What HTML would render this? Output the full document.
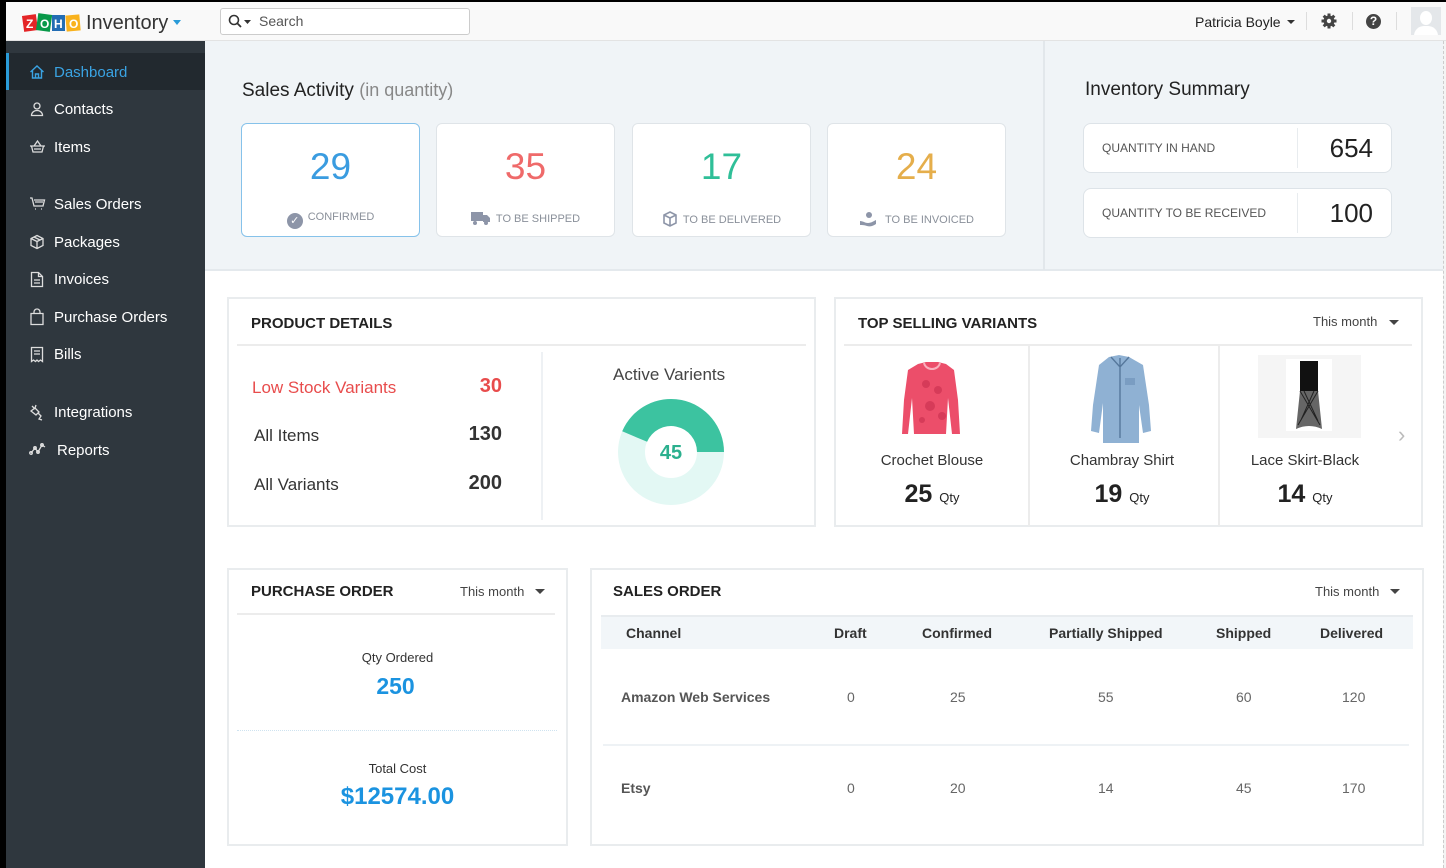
<!DOCTYPE html>
<html><head><meta charset="utf-8"><style>
*{margin:0;padding:0;box-sizing:border-box}
body{width:1446px;height:868px;overflow:hidden;background:#000;font-family:"Liberation Sans",sans-serif;color:#333;position:relative}
.a{position:absolute;white-space:nowrap}
.box{position:absolute;background:#fff;border:2px solid #e9ecee}
.card{position:absolute;background:#fff;border:1px solid #dfe4e8;border-radius:6px;width:179px;height:114px;top:123px}
.num{position:absolute;left:0;right:0;top:22px;text-align:center;font-size:37px;font-weight:300;letter-spacing:0px}
.lbl{position:absolute;left:0;right:0;top:87px;text-align:center;font-size:11px;color:#8a909a}
.nav{position:absolute;left:54px;font-size:15px;color:#fff}
.ic{position:absolute;left:29px}
.inv{position:absolute;left:1083px;width:309px;height:50px;background:#fff;border:1px solid #dde3e8;border-radius:8px}
.th{font-size:14px;font-weight:bold;color:#333}
.td{font-size:14px;color:#666}
.rn{position:absolute;right:0;width:80px;text-align:right}
</style></head><body>
<div class="a" style="left:6px;top:2px;width:1440px;height:866px;background:#fff"></div>
<div class="a" style="left:6px;top:2px;width:1440px;height:39px;background:#f9f9f9;border-bottom:1px solid #e3e3e3"></div>
<div class="a" style="left:22px;top:11px;height:21px">
<svg width="60" height="24" viewBox="0 0 60 24"><rect x="1" y="4" width="14" height="16" fill="#e42527" transform="rotate(-8 8 12)"/><rect x="15" y="3" width="14" height="17" fill="#089949" transform="rotate(8 22 12)"/><rect x="30" y="4" width="13" height="16" fill="#226db4"/><rect x="44" y="4" width="14" height="16" fill="#f9b21d" transform="rotate(-5 51 12)"/><text x="4" y="17" font-size="12" font-weight="bold" fill="#fff" font-family="Liberation Sans">Z</text><text x="18" y="17" font-size="12" font-weight="bold" fill="#fff" font-family="Liberation Sans">O</text><text x="32" y="17" font-size="12" font-weight="bold" fill="#fff" font-family="Liberation Sans">H</text><text x="47" y="17" font-size="12" font-weight="bold" fill="#fff" font-family="Liberation Sans">O</text></svg></div>
<div class="a" style="left:86px;top:11px;font-size:20px;color:#333;line-height:24px">Inventory</div>
<div class="a" style="left:173px;top:20px;border:4px solid transparent;border-top:5px solid #2a9bd8"></div>
<div class="a" style="left:220px;top:8px;width:250px;height:27px;background:#fff;border:1px solid #ccc;border-radius:3px"></div>
<svg class="a" style="left:228px;top:14px" width="26" height="15"><circle cx="6" cy="6" r="4.5" fill="none" stroke="#333" stroke-width="1.6"/><line x1="9.5" y1="9.5" x2="13" y2="13" stroke="#333" stroke-width="1.8"/><path d="M16 6h7l-3.5 4z" fill="#333"/></svg>
<div class="a" style="left:259px;top:12px;font-size:14px;color:#555;line-height:18px">Search</div>
<div class="a" style="left:1195px;top:13px;font-size:14px;color:#222;line-height:18px">Patricia Boyle</div>
<div class="a" style="left:1287px;top:20px;border:4px solid transparent;border-top:4px solid #333"></div>
<div class="a" style="left:1306px;top:12px;width:1px;height:18px;background:#ddd"></div>
<svg class="a" style="left:1321px;top:13px" width="16" height="16" viewBox="0 0 16 16"><g fill="#444"><circle cx="8" cy="8" r="5.5"/><rect x="6.5" y="0.5" width="3" height="15"/><rect x="0.5" y="6.5" width="15" height="3"/><rect x="6.5" y="0.5" width="3" height="15" transform="rotate(45 8 8)"/><rect x="6.5" y="0.5" width="3" height="15" transform="rotate(-45 8 8)"/></g><circle cx="8" cy="8" r="2.2" fill="#f9f9f9"/></svg>
<div class="a" style="left:1352px;top:12px;width:1px;height:18px;background:#ddd"></div>
<div class="a" style="left:1366px;top:14px;width:15px;height:15px;border-radius:50%;background:#444;color:#fff;font-size:12px;font-weight:bold;text-align:center;line-height:15px">?</div>
<div class="a" style="left:1396px;top:12px;width:1px;height:18px;background:#ddd"></div>
<div class="a" style="left:1411px;top:7px;width:30px;height:28px;background:#e4e7ea;overflow:hidden"><div style="position:absolute;left:9px;top:4px;width:12px;height:14px;border-radius:50%;background:#fff"></div><div style="position:absolute;left:3px;top:19px;width:24px;height:14px;border-radius:10px 10px 0 0;background:#fff"></div></div>
<div class="a" style="left:6px;top:41px;width:199px;height:827px;background:#2f373e"></div>
<div class="a" style="left:6px;top:53px;width:199px;height:37px;background:#22292f;border-left:3px solid #2a9bd8"></div>
<svg class="ic" style="top:64px" width="16" height="16" viewBox="0 0 16 16" fill="none" stroke="#3aa3e3" stroke-width="1.4"><path d="M1.5 8L8 2l6.5 6M3.5 6.5V14h9V6.5M6.5 14v-4h3v4"/></svg>
<div class="nav" style="top:64px;color:#3aa3e3">Dashboard</div>
<svg class="ic" style="top:101px" width="16" height="16" viewBox="0 0 16 16" fill="none" stroke="#ddd" stroke-width="1.3"><circle cx="8" cy="5" r="3"/><path d="M2.5 14.5c0-3 2.5-5 5.5-5s5.5 2 5.5 5z"/></svg>
<div class="nav" style="top:101px">Contacts</div>
<svg class="ic" style="top:139px" width="17" height="16" viewBox="0 0 17 16" fill="none" stroke="#ddd" stroke-width="1.3"><path d="M1 7h15M2.5 7l1.5 6h9l1.5-6M5 7l3.5-5 3.5 5M5 10h7"/></svg>
<div class="nav" style="top:139px">Items</div>
<svg class="ic" style="top:196px" width="17" height="16" viewBox="0 0 17 16" fill="none" stroke="#ddd" stroke-width="1.3"><path d="M1 2h2l2 8h9l1.5-6H5M6 6h8M6 13h1M12 13h1"/></svg>
<div class="nav" style="top:196px">Sales Orders</div>
<svg class="ic" style="top:234px" width="16" height="16" viewBox="0 0 16 16" fill="none" stroke="#ddd" stroke-width="1.3"><path d="M8 1.5l6 3v7l-6 3-6-3v-7zM2 4.5l6 3 6-3M8 7.5v7M5 3l6 3"/></svg>
<div class="nav" style="top:234px">Packages</div>
<svg class="ic" style="top:271px" width="16" height="17" viewBox="0 0 16 17" fill="none" stroke="#ddd" stroke-width="1.3"><path d="M2.5 1.5h7l4 4v10h-11zM9.5 1.5v4h4M5 9h6M5 12h6"/></svg>
<div class="nav" style="top:271px">Invoices</div>
<svg class="ic" style="top:308px" width="16" height="18" viewBox="0 0 16 18" fill="none" stroke="#ddd" stroke-width="1.3"><path d="M2 5.5h12v11H2zM5 5.5V4a3 3 0 016 0v1.5"/></svg>
<div class="nav" style="top:309px">Purchase Orders</div>
<svg class="ic" style="top:346px" width="16" height="17" viewBox="0 0 16 17" fill="none" stroke="#ddd" stroke-width="1.3"><path d="M2.5 1.5h11v14l-2-1.5-2 1.5-1.5-1.5-1.5 1.5-2-1.5-2 1.5zM5 5h6M5 8h6"/></svg>
<div class="nav" style="top:346px">Bills</div>
<svg class="ic" style="top:404px" width="16" height="17" viewBox="0 0 16 17" fill="none" stroke="#ddd" stroke-width="1.3"><path d="M3 2l3 3M7 1l-1 3M2 7l4-3 4 4-3 3zM9 9l3 3-2 3 3 1"/></svg>
<div class="nav" style="top:404px">Integrations</div>
<svg class="ic" style="top:441px" width="18" height="16" viewBox="0 0 18 16" fill="none" stroke="#ddd" stroke-width="1.3"><path d="M2 12l4-5 3 4 4-7 3 2"/><circle cx="2" cy="12" r="1.3"/><circle cx="6" cy="7" r="1.3"/><circle cx="9" cy="11" r="1.3"/><circle cx="13" cy="4" r="1.3"/></svg>
<div class="nav" style="top:442px;left:57px">Reports</div>
<div class="a" style="left:205px;top:41px;width:1238px;height:230px;background:#f0f4f7;border-bottom:2px solid #e4e9ed"></div>
<div class="a" style="left:1043px;top:41px;width:2px;height:229px;background:#e2e7eb"></div>
<div class="a" style="left:1443px;top:41px;width:3px;height:827px;background:#f4f4f4;border-left:1px dashed #ccc"></div>
<div class="a" style="left:242px;top:78px;font-size:19px;color:#222;line-height:24px">Sales Activity <span style="color:#888;font-weight:300;font-size:18px">(in quantity)</span></div>
<div class="card" style="left:241px;border:1.5px solid #86c2ea"><div class="num" style="color:#3a9ce0">29</div><div class="lbl"><span style="display:inline-block;width:16px;height:16px;border-radius:50%;background:#8d95a8;color:#fff;font-size:11px;line-height:16px;vertical-align:-4px;margin-right:5px">✓</span>CONFIRMED</div></div>
<div class="card" style="left:436px"><div class="num" style="color:#ef6a6a">35</div><div class="lbl"><svg width="20" height="14" style="vertical-align:-3px;margin-right:5px"><rect x="0" y="1" width="12" height="9" fill="#8d95a8"/><path d="M12 4h4l3 3v4h-7z" fill="#8d95a8"/><circle cx="4" cy="12" r="2" fill="#8d95a8"/><circle cx="15" cy="12" r="2" fill="#8d95a8"/></svg>TO BE SHIPPED</div></div>
<div class="card" style="left:632px"><div class="num" style="color:#2fbf98">17</div><div class="lbl"><svg width="16" height="16" style="vertical-align:-4px;margin-right:5px" fill="none" stroke="#8d95a8" stroke-width="1.6"><path d="M8 1l6 3v8l-6 3-6-3V4zM2 4l6 3 6-3M8 7v8"/></svg>TO BE DELIVERED</div></div>
<div class="card" style="left:827px"><div class="num" style="color:#e5ae4b">24</div><div class="lbl"><svg width="18" height="16" style="vertical-align:-4px;margin-right:8px"><circle cx="10" cy="4" r="3" fill="#8d95a8"/><path d="M1 10c3 0 5 2 8 2s6-2 8-3v4c-3 2-6 3-9 2s-5-1-7-1z" fill="#8d95a8"/></svg>TO BE INVOICED</div></div>
<div class="a" style="left:1085px;top:78px;font-size:19px;color:#222;line-height:24px">Inventory Summary</div>
<div class="inv" style="top:123px"><div class="a" style="left:18px;top:17px;font-size:12px;color:#555">QUANTITY IN HAND</div><div class="a" style="left:213px;top:4px;width:1px;height:40px;background:#e8ecef"></div><div class="a" style="right:18px;top:9px;font-size:26px;color:#222">654</div></div>
<div class="inv" style="top:188px"><div class="a" style="left:18px;top:17px;font-size:12px;color:#555">QUANTITY TO BE RECEIVED</div><div class="a" style="left:213px;top:4px;width:1px;height:40px;background:#e8ecef"></div><div class="a" style="right:18px;top:9px;font-size:26px;color:#222">100</div></div>
<div class="box" style="left:227px;top:297px;width:589px;height:230px"></div>
<div class="a" style="left:251px;top:315px;font-size:15px;font-weight:bold;color:#222">PRODUCT DETAILS</div>
<div class="a" style="left:237px;top:344px;width:569px;height:2px;background:#ececec"></div>
<div class="a" style="left:541px;top:352px;width:2px;height:168px;background:#eef1f4"></div>
<div class="a" style="left:252px;top:378px;font-size:17px;color:#e84c4c">Low Stock Variants</div>
<div class="a" style="left:422px;width:80px;text-align:right;top:375px;font-size:20px;color:#e84c4c;font-weight:bold">30</div>
<div class="a" style="left:254px;top:426px;font-size:17px;color:#333">All Items</div>
<div class="a" style="left:422px;width:80px;text-align:right;top:423px;font-size:20px;color:#333;font-weight:bold">130</div>
<div class="a" style="left:254px;top:475px;font-size:17px;color:#333">All Variants</div>
<div class="a" style="left:422px;width:80px;text-align:right;top:472px;font-size:20px;color:#333;font-weight:bold">200</div>
<div class="a" style="left:613px;top:365px;font-size:17px;color:#444">Active Varients</div>
<svg class="a" style="left:616px;top:397px" width="110" height="110"><circle cx="55" cy="55" r="39.5" fill="none" stroke="#e3f8f4" stroke-width="27"/><path d="M108 55A53 53 0 0 0 6.2 34.3L31.1 44.8A26 26 0 0 1 81 55Z" fill="#3cc3a0"/><text x="55" y="62" text-anchor="middle" font-size="20" font-weight="bold" fill="#2bb08e" font-family="Liberation Sans">45</text></svg>
<div class="box" style="left:834px;top:297px;width:589px;height:230px"></div>
<div class="a" style="left:858px;top:315px;font-size:15px;font-weight:bold;color:#222">TOP SELLING VARIANTS</div>
<div class="a" style="left:1313px;top:314px;font-size:13px;color:#444">This month</div>
<div class="a" style="left:1389px;top:320px;border:5px solid transparent;border-top:5px solid #444"></div>
<div class="a" style="left:844px;top:344px;width:568px;height:2px;background:#ececec"></div>
<div class="a" style="left:1028px;top:346px;width:2px;height:180px;background:#ececec"></div>
<div class="a" style="left:1218px;top:346px;width:2px;height:180px;background:#ececec"></div>
<svg class="a" style="left:900px;top:360px" width="64" height="78" viewBox="0 0 64 78"><path d="M18 4l8-2h12l8 2 8 6 4 30 2 34h-8l-4-36-2 36H14l-2-36-4 36H2l2-34 4-30z" fill="#ec4e6a"/><path d="M24 3c2 8 14 8 16 0" fill="none" stroke="#f9b0bd" stroke-width="2"/><g fill="#c92f4e" opacity=".6"><circle cx="26" cy="24" r="4"/><circle cx="38" cy="30" r="4"/><circle cx="30" cy="46" r="5"/><circle cx="22" cy="60" r="3"/><circle cx="42" cy="56" r="4"/></g></svg>
<svg class="a" style="left:1087px;top:354px" width="66" height="92" viewBox="0 0 66 92"><path d="M22 3l10-2 10 2 14 8 6 40 2 26-8 2-4-28v38H16V49l-4 30-8-2 2-26 6-40z" fill="#8fb1d3"/><path d="M33 4v80M24 3l9 10 9-10" fill="none" stroke="#56789c" stroke-width="1.4"/><rect x="38" y="24" width="10" height="7" fill="#7a9dc2"/></svg>
<div class="a" style="left:1258px;top:355px;width:103px;height:83px;background:#f5f5f5"></div>
<div class="a" style="left:1286px;top:359px;width:46px;height:72px;background:#fff"></div>
<svg class="a" style="left:1292px;top:360px" width="34" height="72" viewBox="0 0 34 72"><path d="M8 1h18v30H8z" fill="#111"/><path d="M8 31h18l4 38c-8-4-18-4-26 0z" fill="#666"/><path d="M8 31l20 34M26 31L6 65M12 31l14 30M22 31L9 60" stroke="#222" stroke-width="1"/></svg>
<div class="a" style="left:1398px;top:422px;font-size:22px;color:#bbb">›</div>
<div class="a" style="left:836px;width:192px;top:452px;text-align:center;font-size:15px;color:#333">Crochet Blouse</div>
<div class="a" style="left:836px;width:192px;top:480px;text-align:center;font-size:25px;font-weight:bold;color:#222">25 <span style="font-size:13px;font-weight:normal">Qty</span></div>
<div class="a" style="left:1028px;width:188px;top:452px;text-align:center;font-size:15px;color:#333">Chambray Shirt</div>
<div class="a" style="left:1028px;width:188px;top:480px;text-align:center;font-size:25px;font-weight:bold;color:#222">19 <span style="font-size:13px;font-weight:normal">Qty</span></div>
<div class="a" style="left:1212px;width:186px;top:452px;text-align:center;font-size:15px;color:#333">Lace Skirt-Black</div>
<div class="a" style="left:1212px;width:186px;top:480px;text-align:center;font-size:25px;font-weight:bold;color:#222">14 <span style="font-size:13px;font-weight:normal">Qty</span></div>
<div class="box" style="left:227px;top:568px;width:341px;height:278px"></div>
<div class="a" style="left:251px;top:583px;font-size:15px;font-weight:bold;color:#222">PURCHASE ORDER</div>
<div class="a" style="left:460px;top:584px;font-size:13px;color:#444">This month</div>
<div class="a" style="left:535px;top:589px;border:5px solid transparent;border-top:5px solid #444"></div>
<div class="a" style="left:237px;top:613px;width:318px;height:2px;background:#ececec"></div>
<div class="a" style="left:229px;width:337px;top:650px;text-align:center;font-size:13px;color:#333">Qty Ordered</div>
<div class="a" style="left:227px;width:337px;top:673px;text-align:center;font-size:23px;font-weight:bold;color:#1b93e0">250</div>
<div class="a" style="left:237px;top:730px;width:320px;border-top:1px dotted #cfe3f0"></div>
<div class="a" style="left:229px;width:337px;top:761px;text-align:center;font-size:13px;color:#333">Total Cost</div>
<div class="a" style="left:229px;width:337px;top:783px;text-align:center;font-size:24px;font-weight:bold;color:#1b93e0">$12574.00</div>
<div class="box" style="left:590px;top:568px;width:834px;height:278px"></div>
<div class="a" style="left:613px;top:583px;font-size:15px;font-weight:bold;color:#222">SALES ORDER</div>
<div class="a" style="left:1315px;top:584px;font-size:13px;color:#444">This month</div>
<div class="a" style="left:1390px;top:589px;border:5px solid transparent;border-top:5px solid #444"></div>
<div class="a" style="left:601px;top:615px;width:812px;height:34px;background:#f2f6f9;border-top:2px solid #e8ecef"></div>
<div class="a th" style="left:626px;top:625px">Channel</div>
<div class="a th" style="left:834px;top:625px">Draft</div>
<div class="a th" style="left:922px;top:625px">Confirmed</div>
<div class="a th" style="left:1049px;top:625px">Partially Shipped</div>
<div class="a th" style="left:1216px;top:625px">Shipped</div>
<div class="a th" style="left:1320px;top:625px">Delivered</div>
<div class="a td" style="left:621px;top:689px;font-weight:bold;color:#555">Amazon Web Services</div>
<div class="a td" style="left:847px;top:689px">0</div>
<div class="a td" style="left:950px;top:689px">25</div>
<div class="a td" style="left:1098px;top:689px">55</div>
<div class="a td" style="left:1236px;top:689px">60</div>
<div class="a td" style="left:1342px;top:689px">120</div>
<div class="a" style="left:603px;top:744px;width:806px;height:2px;background:#eef2f5"></div>
<div class="a td" style="left:621px;top:780px;font-weight:bold;color:#555">Etsy</div>
<div class="a td" style="left:847px;top:780px">0</div>
<div class="a td" style="left:950px;top:780px">20</div>
<div class="a td" style="left:1098px;top:780px">14</div>
<div class="a td" style="left:1236px;top:780px">45</div>
<div class="a td" style="left:1342px;top:780px">170</div>
</body></html>
